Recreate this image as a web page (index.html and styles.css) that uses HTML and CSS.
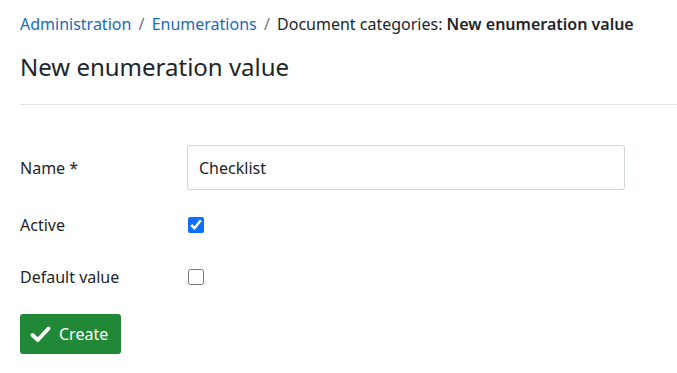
FILE: index.html
```html
<!DOCTYPE html>
<html lang="en">
<head>
    <meta charset="UTF-8">
    <meta name="viewport" content="width=device-width, initial-scale=1.0">
    <title>New enumeration value</title>
    <link rel="stylesheet" href="styles.css">
</head>
<body>
    <div class="content">
        <nav class="breadcrumb">
            <a href="#">Administration</a>
            <span class="sep">/</span>
            <a href="#">Enumerations</a>
            <span class="sep">/</span>
            <span>Document categories: <strong>New enumeration value</strong></span>
        </nav>
        <h2 class="page-title">New enumeration value</h2>
        <hr>
        <form class="enum-form">
            <div class="form-row">
                <label for="name">Name *</label>
                <input type="text" id="name" class="form-control" value="Checklist">
            </div>
            <div class="form-row">
                <label for="active">Active</label>
                <input type="checkbox" id="active" class="check" checked>
            </div>
            <div class="form-row">
                <label for="default">Default value</label>
                <input type="checkbox" id="default" class="check">
            </div>
            <button type="submit" class="btn-create">
                <svg width="21" height="17" viewBox="0 0 21 17"><path d="M2.5 9 L7.8 14 L18.5 2.5" fill="none" stroke="white" stroke-width="3.8" stroke-linecap="round" stroke-linejoin="round"/></svg>
                Create
            </button>
        </form>
    </div>
</body>
</html>
```

FILE: styles.css
```css
body {
    margin: 0;
    font-family: "Noto Sans", "Open Sans", sans-serif;
    font-size: 16px;
    color: #212529;
    background: #fff;
}

.content {
    padding: 12px 0 0 20px;
}

.breadcrumb {
    line-height: 24px;
}

.breadcrumb a {
    color: #1a6bb8;
    text-decoration: none;
}

.breadcrumb .sep {
    color: #6c757d;
    margin: 0 3px;
}

.breadcrumb strong {
    font-weight: 600;
}

.page-title {
    margin: 16px 0 0;
    font-size: 24px;
    font-weight: 400;
    line-height: 29px;
}

hr {
    margin: 23px 0 0;
    border: none;
    border-top: 1px solid #dee2e6;
}

.enum-form {
    padding-top: 40px;
}

.form-row {
    display: grid;
    grid-template-columns: 167px 438px;
    align-items: center;
    min-height: 40px;
    margin-bottom: 12px;
}

.form-row:first-child {
    margin-bottom: 15px;
}

.form-row:nth-child(3) {
    margin-bottom: 17px;
}

.form-control {
    box-sizing: border-box;
    height: 45px;
    padding: 6px 11px;
    border: 1px solid #ced4da;
    border-radius: 3px;
    font: inherit;
    color: #212529;
}

.check {
    width: 16px;
    height: 16px;
    margin: 0 0 0 1px;
    accent-color: #0d6efd;
}

.btn-create {
    display: flex;
    align-items: center;
    gap: 8px;
    height: 40px;
    padding: 0 13px 0 10px;
    background-color: #218838;
    color: white;
    border: none;
    border-radius: 3px;
    font: inherit;
    cursor: pointer;
}
```
